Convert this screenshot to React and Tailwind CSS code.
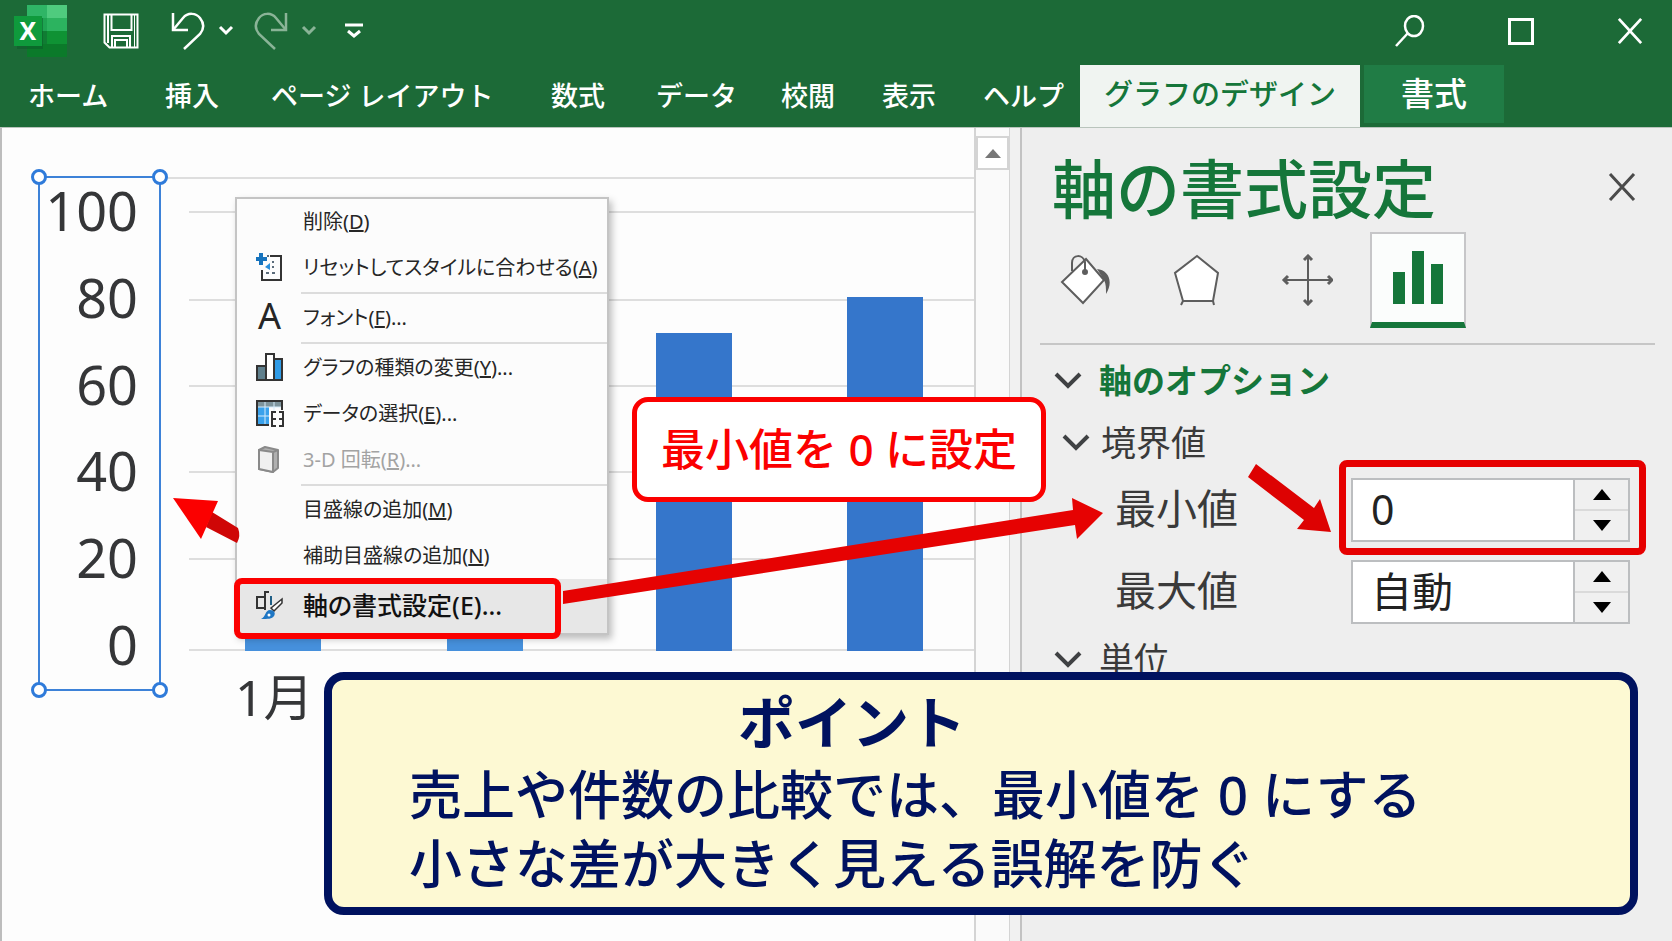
import React, { useState } from "react";

const tabs = [
  { label: "ホーム", spacing: "w-[137px]" },
  { label: "挿入", spacing: "w-[106px]" },
  { label: "ページ レイアウト", spacing: "w-[280px]" },
  { label: "数式", spacing: "w-[105px]" },
  { label: "データ", spacing: "w-[125px]" },
  { label: "校閲", spacing: "w-[101px]" },
  { label: "表示", spacing: "w-[101px]" },
  { label: "ヘルプ", spacing: "w-[97px]" },
];

const axisLabels = [100, 80, 60, 40, 20, 0];

const gridRows = ["h-[34px]", "h-[88px]", "h-[86px]", "h-[86px]", "h-[87px]", "h-[91px]"];

const bars = [
  { month: "1月", style: "ml-[56px] h-[150px] bg-[#4690dc]" },
  { month: "2月", style: "ml-[126px] h-[230px] bg-[#4690dc]" },
  { month: "3月", style: "ml-[133px] h-[318px] bg-[#3576cb]" },
  { month: "4月", style: "ml-[115px] h-[354px] bg-[#3576cb]" },
];

/* ---------- Icons ---------- */

function ExcelLogo() {
  return (
    <svg width="54" height="54" viewBox="0 0 54 54" aria-hidden="true">
      <path d="M13 1h20v13H13z" fill="#2fb566" />
      <path d="M33 1h20v13H33z" fill="#4fcb7e" />
      <path d="M13 14h20v13H13z" fill="#1fa452" />
      <path d="M33 14h20v13H33z" fill="#2cb35f" />
      <path d="M13 27h20v13H13z" fill="#107c33" />
      <path d="M33 27h20v13H33z" fill="#0f9234" />
      <path d="M13 40h40v13H13z" fill="#0b7a2a" />
      <path d="M3 14h26v31H3z" fill="#0a5a28" opacity="0.5" />
      <path d="M0 12h28v30H0z" fill="#0f9a3c" />
      <text x="14" y="36" textAnchor="middle" fontSize="25" fontWeight="700" fill="#fff">X</text>
    </svg>
  );
}

function SaveIcon() {
  return (
    <svg width="36" height="36" viewBox="0 0 36 36" fill="none" stroke="#fff" strokeWidth="2" aria-hidden="true">
      <path d="M1.500 1.500h33v33H6.500l-5-5z" />
      <path d="M5 2v28" />
      <path d="M8.500 2v15h20V2" />
      <path d="M31.500 2v32" strokeWidth="1" />
      <path d="M9 34V23h18v11M12 34v-7h12v7" />
    </svg>
  );
}

function UndoIcon() {
  return (
    <svg width="34" height="38" viewBox="0 0 34 38" fill="none" stroke="currentColor" strokeWidth="2.500" aria-hidden="true">
      <path d="M2 1v17h15" />
      <path d="M2 18L12 6C17 0 25 1 29 6c4 5 4 11 0 16L13 37" />
    </svg>
  );
}

function Caret() {
  return (
    <svg width="16" height="12" viewBox="0 0 16 12" fill="none" stroke="currentColor" strokeWidth="3" aria-hidden="true">
      <path d="M2 2l6 6 6-6" />
    </svg>
  );
}

function CloseIcon({ size, stroke }) {
  return (
    <svg width={size} height={size} viewBox="0 0 28 28" fill="none" stroke="currentColor" strokeWidth={stroke} aria-hidden="true">
      <path d="M2 1l24 26M26 1L2 27" />
    </svg>
  );
}

function Chevron() {
  return (
    <svg width="28" height="18" viewBox="0 0 28 18" fill="none" stroke="#3f4143" strokeWidth="4" aria-hidden="true">
      <path d="M2 2l12 12L26 2" />
    </svg>
  );
}

function ResetIcon() {
  return (
    <svg width="28" height="30" viewBox="0 0 28 30" fill="none" aria-hidden="true">
      <path d="M14 3h11v24H6V17" stroke="#333" strokeWidth="2" />
      <path d="M5 0v12M0 6h11" stroke="#1673bd" strokeWidth="4" />
      <path d="M14 10v7l-5-3z" fill="#2a8fdc" />
      <path d="M11 3h2M16 9h2M16 14h2M10 20h3M16 20h3" stroke="#5a6b7a" strokeWidth="2" />
    </svg>
  );
}

function ChartTypeIcon() {
  return (
    <svg width="28" height="30" viewBox="0 0 28 30" stroke="#333" strokeWidth="2" aria-hidden="true">
      <path d="M1 13h9v14H1z" fill="#5f7f8c" />
      <path d="M18 6h8v21h-8z" fill="#2f9be6" />
      <path d="M10 1h8v26h-8z" fill="#fff" />
    </svg>
  );
}

function SelectDataIcon() {
  return (
    <svg width="28" height="30" viewBox="0 0 28 30" fill="none" aria-hidden="true">
      <path d="M1 2h25v6H1z" fill="#7e949c" />
      <path d="M1 8h12v18H1z" fill="#3aa2ec" />
      <path d="M9 2v24M18 2v10M1 8h25M1 17h12" stroke="#d6ecfb" strokeWidth="1" />
      <path d="M26 11V2H1v24h12" stroke="#333" strokeWidth="2" />
      <path d="M20 13h-4v14h4M23 13h4v14h-4M16 20h4M23 20h4" stroke="#333" strokeWidth="2" />
    </svg>
  );
}

function RotateIcon() {
  return (
    <svg width="28" height="30" viewBox="0 0 28 30" stroke="#8a8a8a" strokeWidth="2" strokeLinejoin="round" aria-hidden="true">
      <path d="M3 5l6-3 13 3v18l-5 4L3 24z" fill="#b0b0b0" />
      <path d="M3 5l14 2v20L3 24z" fill="#f0f0f0" />
      <path d="M17 7l5-2" />
    </svg>
  );
}

function FormatAxisIcon() {
  return (
    <svg width="28" height="30" viewBox="0 0 28 30" fill="none" aria-hidden="true">
      <path d="M8 6H1v11h7M13 1H9v18" stroke="#333" strokeWidth="2" />
      <path d="M15 5v9" stroke="#1f5f86" strokeWidth="2" />
      <path d="M15 17L26 8v4l-8 8z" stroke="#333" strokeWidth="1.500" fill="#fff" />
      <path d="M5 28c5-2 4-9 9-9 4 0 6 3 4 6-2 3-6 3-13 3z" fill="#1f77c4" />
      <circle cx="13" cy="24" r="1.500" fill="#fff" />
    </svg>
  );
}

function FillIcon() {
  return (
    <svg width="52" height="52" viewBox="0 0 52 52" fill="none" stroke="#5d5d5d" strokeWidth="2" aria-hidden="true">
      <path d="M27 5L45 26 24 49 3 28z" fill="#fff" />
      <path d="M13 17V9c0-9 11-9 13-1v11" />
      <circle cx="26" cy="18" r="2" fill="#5d5d5d" />
      <path d="M38 15c11 1 17 12 9 25 0-6 0-10-2-14z" fill="#5d5d5d" stroke="none" />
    </svg>
  );
}

function EffectsIcon() {
  return (
    <svg width="48" height="52" viewBox="0 0 48 52" fill="none" stroke="#5d5d5d" strokeWidth="2" aria-hidden="true">
      <path d="M25 2l21 17-5 28H11L3 19z" fill="#fff" />
      <path d="M11 47l-2 4M41 47l1 4" />
    </svg>
  );
}

function SizeIcon() {
  return (
    <svg width="52" height="52" viewBox="0 0 52 52" fill="none" stroke="#5d5d5d" strokeWidth="2" aria-hidden="true">
      <path d="M27 2v48M3 26h48" />
      <path d="M23 6l4-4 4 4M23 46l4 4 4-4M7 22l-4 4 4 4M47 22l4 4-4 4" strokeWidth="3" />
    </svg>
  );
}

function AxisOptionsIcon() {
  return (
    <svg width="50" height="54" viewBox="0 0 50 54" fill="#15763a" aria-hidden="true">
      <path d="M0 21h12v32H0zM19 0h12v53H19zM38 13h12v40H38z" />
    </svg>
  );
}

/* ---------- Ribbon ---------- */

function Ribbon() {
  return (
    <header className="h-[127px] bg-[#1c6a37] text-white">
      <div className="flex h-[65px] items-center pr-[29px] pb-[3px] pl-[14px]">
        <ExcelLogo />
        <button aria-label="上書き保存" className="ml-[35px]"><SaveIcon /></button>
        <button aria-label="元に戻す" className="ml-8"><UndoIcon /></button>
        <button aria-label="元に戻すの一覧" className="ml-[13px]"><Caret /></button>
        <button aria-label="やり直し" className="ml-5 -scale-x-100 text-[#8ab497]"><UndoIcon /></button>
        <button aria-label="やり直しの一覧" className="ml-[13px] text-[#8ab497]"><Caret /></button>
        <button aria-label="ツール バーのカスタマイズ" className="ml-7">
          <svg width="18" height="16" viewBox="0 0 18 16" fill="none" stroke="#fff" aria-hidden="true">
            <path d="M0 2h18" strokeWidth="3" />
            <path d="M3 8l6 5 6-5" strokeWidth="3" />
          </svg>
        </button>

        <button aria-label="検索" className="ml-auto">
          <svg width="30" height="32" viewBox="0 0 30 32" fill="none" stroke="#fff" strokeWidth="2.500" aria-hidden="true">
            <ellipse cx="19" cy="11" rx="9" ry="10" />
            <path d="M13 18L1 31" />
          </svg>
        </button>
        <button aria-label="最大化" className="ml-[83px] h-[27px] w-[26px] border-3 border-white" />
        <button aria-label="閉じる" className="ml-[83px]"><CloseIcon size={26} stroke={3} /></button>
      </div>

      <nav className="flex h-[62px] pl-[28px] text-[27px] leading-[58px] font-medium whitespace-nowrap">
        {tabs.map((tab) => (
          <button key={tab.label} className={`${tab.spacing} shrink-0 text-left`}>
            {tab.label}
          </button>
        ))}
        <button className="w-[280px] shrink-0 bg-[#f0f4f1] pb-1 text-center text-[29px] text-[#15763a]">
          グラフのデザイン
        </button>
        <button className="ml-1 h-[58px] w-[140px] shrink-0 bg-[#207c45] text-center text-[33px]">書式</button>
      </nav>
    </header>
  );
}

/* ---------- Chart ---------- */

function Handle({ position }) {
  return <span className={`absolute size-4 rounded-full border-3 border-[#2f7bda] bg-white ${position}`} />;
}

function Chart() {
  return (
    <section className="relative min-w-0 flex-1 border-l-2 border-[#bdbdbd] bg-[#fdfdfd] pt-[48px] pl-[36px]">
      <div className="flex">
        {/* Selected value axis */}
        <div className="relative flex h-[515px] w-[123px] shrink-0 flex-col justify-between border-2 border-[#3d82d8] pr-[21px] pb-[13px] text-right text-[54px] leading-[64px] text-[#353638]">
          {axisLabels.map((value) => (
            <span key={value}>{value}</span>
          ))}
          <Handle position="-top-[9px] -left-[9px]" />
          <Handle position="-top-[9px] -right-[9px]" />
          <Handle position="-bottom-[9px] -left-[9px]" />
          <Handle position="-right-[9px] -bottom-[9px]" />
        </div>

        {/* Plot area */}
        <div className="ml-[6px] min-w-0 flex-1 pt-px">
          <div className="border-t-2 border-[#dedede] pl-[22px]">
            <div className="relative">
              {gridRows.map((row, i) => (
                <div key={i} className={`${row} border-b-2 border-[#dedede]`} />
              ))}
              <div className="absolute inset-0 flex items-end">
                {bars.map((bar) => (
                  <div key={bar.month} className={`${bar.style} w-[76px] shrink-0`} />
                ))}
              </div>
            </div>
            <p className="pt-[13px] pl-[46px] text-[50px] leading-[66px] text-[#353638]">1月</p>
          </div>
        </div>
      </div>
      <ContextMenu />
    </section>
  );
}

function MenuItem({ icon, children, disabled }) {
  return (
    <button
      role="menuitem"
      disabled={disabled}
      className="flex h-[46px] w-full items-center pl-[19px] text-left disabled:text-[#a3a3a3]"
    >
      <span className="flex w-[47px] shrink-0">{icon}</span>
      <span>{children}</span>
    </button>
  );
}

function Separator() {
  return <div className="my-px ml-[64px] h-[2px] bg-[#dcdcdc]" />;
}

function ContextMenu() {
  return (
    <div
      role="menu"
      className="absolute top-[69px] left-[233px] h-[438px] w-[374px] border-2 border-[#c4c4c4] bg-[#fcfcfc] text-[20px] whitespace-nowrap text-[#262626] shadow-[3px_4px_7px_rgba(0,0,0,0.25)] [font-feature-settings:'palt']"
    >
      <MenuItem>削除(<u>D</u>)</MenuItem>
      <MenuItem icon={<ResetIcon />}>リセットしてスタイルに合わせる(<u>A</u>)</MenuItem>
      <Separator />
      <MenuItem icon={<span className="pb-1 pl-[2px] text-[36px] leading-9">A</span>}>フォント(<u>F</u>)...</MenuItem>
      <Separator />
      <MenuItem icon={<ChartTypeIcon />}>グラフの種類の変更(<u>Y</u>)...</MenuItem>
      <MenuItem icon={<SelectDataIcon />}>データの選択(<u>E</u>)...</MenuItem>
      <MenuItem icon={<RotateIcon />} disabled>3-D 回転(<u>R</u>)...</MenuItem>
      <Separator />
      <MenuItem>目盛線の追加(<u>M</u>)</MenuItem>
      <MenuItem>補助目盛線の追加(<u>N</u>)</MenuItem>
      <button
        role="menuitem"
        className="flex h-[54px] w-full items-center bg-[#e7e7e7] pl-[19px] text-left text-[25px] font-medium text-[#111]"
      >
        <span className="flex w-[47px] shrink-0"><FormatAxisIcon /></span>
        <span>軸の書式設定(E)...</span>
      </button>
      <div className="pointer-events-none absolute -bottom-[6px] -left-[3px] h-[61px] w-[327px] rounded-lg border-6 border-[#fb0000]" />
    </div>
  );
}

function ScrollBar() {
  return (
    <div className="flex w-[46px] shrink-0 border-l-2 border-[#d4d4d4] bg-[#f1f1f1]">
      <div className="w-[34px] border-r border-[#d4d4d4] bg-[#fafafa] pt-2">
        <button aria-label="上へスクロール" className="flex h-[34px] w-full items-center justify-center border-2 border-[#d4d4d4] bg-white">
          <svg width="16" height="9" viewBox="0 0 16 9" fill="#777" aria-hidden="true">
            <path d="M8 0l8 9H0z" />
          </svg>
        </button>
      </div>
    </div>
  );
}

/* ---------- Format pane ---------- */

function BoundField({ id, label, value, onChange, marked }) {
  return (
    <div className="flex h-[64px] items-center pr-[42px] pl-[93px]">
      <label htmlFor={id} className="flex-1 pb-1 text-[41px] leading-[60px] text-[#3a3a3a]">{label}</label>
      <div className="relative flex h-full w-[279px] border-2 border-[#bcbec0] bg-white">
        <input
          id={id}
          value={value}
          onChange={(e) => onChange(e.target.value)}
          className="w-0 flex-1 pl-[18px] text-[41px] text-[#222] outline-none"
        />
        <div className="flex w-[55px] flex-col border-l-2 border-[#bcbec0] bg-[#f0f0f0]">
          <button aria-label={`${label}を増やす`} className="flex flex-1 items-center justify-center border-b-2 border-[#dadada]">
            <svg width="18" height="11" viewBox="0 0 18 11" aria-hidden="true"><path d="M9 0l9 11H0z" /></svg>
          </button>
          <button aria-label={`${label}を減らす`} className="flex flex-1 items-center justify-center">
            <svg width="18" height="11" viewBox="0 0 18 11" aria-hidden="true"><path d="M0 0h18l-9 11z" /></svg>
          </button>
        </div>
        {marked && (
          <div className="pointer-events-none absolute -top-[20px] -right-[18px] -bottom-[15px] -left-[14px] rounded-lg border-7 border-[#e60000]" />
        )}
      </div>
    </div>
  );
}

function FormatPane() {
  const [min, setMin] = useState("0");
  const [max, setMax] = useState("自動");

  return (
    <aside className="w-[652px] shrink-0 border-l-2 border-[#c2c2c2] bg-[#eeeeee] whitespace-nowrap">
      <div className="flex items-center justify-between pt-[24px] pr-[36px] pl-[30px]">
        <h2 className="text-[64px] leading-[74px] font-medium text-[#15763a]">軸の書式設定</h2>
        <button aria-label="作業ウィンドウを閉じる" className="pb-1 text-[#4a4a4a]"><CloseIcon size={28} stroke={3} /></button>
      </div>

      <div className="mt-[6px] flex gap-[15px] pl-[15px]">
        <button aria-label="塗りつぶしと線" className="flex h-[96px] w-[96px] items-center justify-center"><FillIcon /></button>
        <button aria-label="効果" className="flex h-[96px] w-[96px] items-center justify-center"><EffectsIcon /></button>
        <button aria-label="サイズとプロパティ" className="flex h-[96px] w-[96px] items-center justify-center"><SizeIcon /></button>
        <button
          aria-label="軸のオプション"
          className="flex h-[96px] w-[96px] items-center justify-center border-2 border-b-6 border-[#c6c6c8] border-b-[#15763a] bg-[#fbfdfc]"
        >
          <AxisOptionsIcon />
        </button>
      </div>

      <div className="mt-[15px] mr-[17px] ml-[18px] border-t-2 border-[#c6c6c6]" />

      <button className="mt-[5px] flex h-[62px] items-center pl-[32px]">
        <Chevron />
        <span className="ml-[17px] text-[33px] font-bold text-[#15763a]">軸のオプション</span>
      </button>
      <button className="flex h-[62px] items-center pl-[40px]">
        <Chevron />
        <span className="ml-[11px] text-[35px] text-[#3a3a3a]">境界値</span>
      </button>

      <div className="mt-1 space-y-[18px]">
        <BoundField id="axis-min" label="最小値" value={min} onChange={setMin} marked />
        <BoundField id="axis-max" label="最大値" value={max} onChange={setMax} />
      </div>

      <button className="mt-[5px] flex h-[62px] items-center pl-[32px]">
        <Chevron />
        <span className="ml-[17px] text-[35px] text-[#3a3a3a]">単位</span>
      </button>
    </aside>
  );
}

/* ---------- Tutorial annotations ---------- */

function Arrows() {
  return (
    <svg className="pointer-events-none absolute top-0 left-0" width="1672" height="813" viewBox="0 128 1672 813" aria-hidden="true">
      <path d="M206 527l6-15 26 16q3 8-1 15z" fill="#cf0606" />
      <path d="M173 498l45 3-17 38z" fill="#fb0000" />
      <path d="M563 591L1073 510l-1-12 31 15-26 26-2-14L563 604z" fill="#e60202" />
      <path d="M1256 464l58 44 6-9 11 33-34-3 7-9-56-43z" fill="#dd0202" />
    </svg>
  );
}

function Callout() {
  return (
    <p className="absolute top-[269px] left-[632px] h-[105px] w-[414px] rounded-2xl border-5 border-[#fb0000] bg-white text-center text-[44px] leading-[94px] font-medium whitespace-nowrap text-[#fb0000]">
      最小値を 0 に設定
    </p>
  );
}

function PointBox() {
  return (
    <div className="absolute right-[34px] bottom-[26px] left-[324px] h-[243px] rounded-[20px] border-8 border-[#00125f] bg-[#fdf9d3] whitespace-nowrap text-[#00125f]">
      <h3 className="pt-[4px] pr-[258px] text-center text-[57px] leading-[76px] font-bold">ポイント</h3>
      <p className="pl-[77px] text-[53px] leading-[69px] font-medium">
        売上や件数の比較では、最小値を 0 にする
        <br />
        小さな差が大きく見える誤解を防ぐ
      </p>
    </div>
  );
}

export default function App() {
  return (
    <div className="flex min-h-screen flex-col overflow-hidden font-['Noto_Sans','Noto_Sans_CJK_JP',sans-serif]">
      <Ribbon />
      <main className="relative flex flex-1 border-t border-[#b9c4bc]">
        <Chart />
        <ScrollBar />
        <FormatPane />
        <Arrows />
        <Callout />
        <PointBox />
      </main>
    </div>
  );
}
